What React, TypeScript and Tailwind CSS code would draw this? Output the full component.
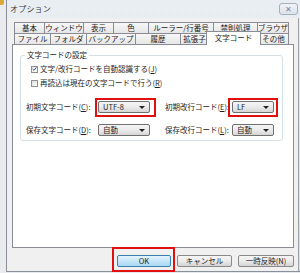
import React from "react";

const row1 = [
  { t: "基本", w: 31 },
  { t: "ウィンドウ", w: 40 },
  { t: "表示", w: 31 },
  { t: "色", w: 36 },
  { t: "ルーラー/行番号", w: 66 },
  { t: "禁則処理", w: 45 },
  { t: "ブラウザ", w: 32 },
];

const row2 = [
  { t: "ファイル", w: 37 },
  { t: "フォルダ", w: 37 },
  { t: "バックアップ", w: 50 },
  { t: "履歴", w: 46 },
  { t: "拡張子", w: 29 },
  { t: "文字コード", w: 51, sel: true },
  { t: "その他", w: 31 },
];

function Combo({ text, w }: { text: string; w: string }) {
  return (
    <div
      className={`${w} h-[12px] flex items-center justify-between pl-[4px] pr-[4px] border border-[#707070] rounded-[2px] bg-gradient-to-b from-[#f4f4f4] via-[#ebebeb] to-[#d6d6d6]`}
    >
      <span className="leading-none whitespace-nowrap">{text}</span>
      <span className="w-0 h-0 border-l-[3px] border-r-[3px] border-t-[3px] border-l-transparent border-r-transparent border-t-[#222]" />
    </div>
  );
}

function Btn({ text, w, def }: { text: React.ReactNode; w: string; def?: boolean }) {
  return (
    <div
      className={`${w} h-[12px] flex items-center justify-center rounded-[2px] border ${
        def
          ? "border-[#3c7fb1] bg-gradient-to-b from-[#e5f4fc] via-[#c4e5f8] to-[#a9d8f3]"
          : "border-[#8a8a8a] bg-gradient-to-b from-[#f6f6f6] via-[#ebebeb] to-[#d4d4d4]"
      }`}
    >
      <span className="leading-none whitespace-nowrap">{text}</span>
    </div>
  );
}

export default function App() {
  return (
    <div className="relative w-[300px] h-[273px] overflow-hidden flex bg-[#e6e9ed] font-['Noto_Sans_CJK_JP','Liberation_Sans',sans-serif] text-[7.5px] leading-none text-[#1e1e1e] whitespace-nowrap">
      {/* window behind */}
      <div className="w-[6px] shrink-0 bg-[#e9ebee]">
        <div className="w-[4px] h-[5px] bg-[#d9a93a] rounded-br-[2px]" />
      </div>
      {/* dialog */}
      <div className="flex-1 flex flex-col border-l border-b border-[#8a9099] bg-gradient-to-b from-[#e9eef3] to-[#d9e1ea] mb-[1px]">
        {/* title bar */}
        <div className="h-[18px] shrink-0 flex items-start justify-between pl-[3px] pr-[2px]">
          <span className="mt-[5px] text-[8px] text-[#3c3c3c] tracking-[0.2px]">オプション</span>
          <div className="mt-[3px] w-[19px] h-[12px] rounded-[3px] border border-[#a4afbd] bg-gradient-to-b from-[#f1f4f7] to-[#dbe2ea] flex items-center justify-center text-[8px] text-[#7b8796]">
            ✕
          </div>
        </div>
        {/* client */}
        <div className="flex-1 flex flex-col bg-[#f0f0f0] mr-[1px] border-r border-[#9aa0a8] pl-[5px] pr-[4px] pt-[4px]">
          {/* tabs */}
          <div className="relative z-10 ml-[2px] flex flex-col">
            <div className="flex h-[11px]">
              {row1.map((t, i) => (
                <div
                  key={t.t}
                  style={{ width: t.w }}
                  className={`${i > 0 ? "-ml-px" : ""} h-[11px] shrink-0 flex items-center justify-center border-l border-t border-r border-[#898c95] rounded-t-[1px] bg-gradient-to-b from-[#f7f7f7] to-[#e6e6e6]`}
                >
                  {t.t}
                </div>
              ))}
            </div>
            <div className="flex h-[11px]">
              {row2.map((t, i) =>
                t.sel ? (
                  <div
                    key={t.t}
                    style={{ width: t.w + 4 }}
                    className="-ml-[3px] -mr-[2px] -mt-[2px] h-[14px] shrink-0 relative z-20 flex items-start justify-center pt-[2px] border-l border-t border-r border-[#898c95] bg-white"
                  >
                    {t.t}
                  </div>
                ) : (
                  <div
                    key={t.t}
                    style={{ width: t.w }}
                    className={`${i > 0 ? "-ml-px" : ""} h-[11px] shrink-0 flex items-center justify-center border-l border-t border-r border-[#898c95] bg-gradient-to-b from-[#f7f7f7] to-[#e6e6e6]`}
                  >
                    {t.t}
                  </div>
                )
              )}
            </div>
          </div>
          {/* panel */}
          <div className="h-[204px] shrink-0 bg-white border border-[#898c95] pt-[6px]">
            <fieldset className="ml-[7px] mr-[10px] border border-[#d5dfe5] rounded-[3px] pb-[4px]">
              <legend className="ml-[4px] px-[2px] leading-[8px]">文字コードの設定</legend>
              <div className="pl-[10px] mt-[6px] flex flex-col gap-[6px]">
                <div className="flex items-center gap-[2px] h-[8px]">
                  <div className="w-[7px] h-[7px] border border-[#8f8f8f] bg-gradient-to-br from-[#e8e8e8] to-[#fbfbfb] flex items-center justify-center">
                    <svg width="6" height="6" viewBox="0 0 6 6">
                      <path d="M0.8 3 L2.4 4.6 L5.3 1" fill="none" stroke="#4a5a70" strokeWidth="1.2" />
                    </svg>
                  </div>
                  <span>
                    文字/改行コードを自動認識する(<span className="underline">J</span>)
                  </span>
                </div>
                <div className="flex items-center gap-[2px] h-[8px]">
                  <div className="w-[7px] h-[7px] border border-[#8f8f8f] bg-gradient-to-br from-[#e2e2e2] to-[#fafafa]" />
                  <span>
                    再読込は現在の文字コードで行う(<span className="underline">R</span>)
                  </span>
                </div>
              </div>
              <div className="pl-[5px] mt-[14px] grid grid-cols-[72px_67px_67px_42px] gap-y-[11px] items-center">
                <span>
                  初期文字コード(<span className="underline">C</span>):
                </span>
                <Combo text="UTF-8" w="w-[52px]" />
                <span>
                  初期改行コード(<span className="underline">E</span>):
                </span>
                <Combo text="LF" w="w-[42px]" />
                <span>
                  保存文字コード(<span className="underline">D</span>):
                </span>
                <Combo text="自動" w="w-[52px]" />
                <span>
                  保存改行コード(<span className="underline">L</span>):
                </span>
                <Combo text="自動" w="w-[42px]" />
              </div>
            </fieldset>
          </div>
          {/* buttons */}
          <div className="mt-[7px] flex justify-end gap-[6px]">
            <Btn text="OK" w="w-[54px]" def />
            <Btn text="キャンセル" w="w-[55px]" />
            <Btn text="一時反映(N)" w="w-[56px]" />
          </div>
        </div>
      </div>
      {/* red annotation boxes */}
      <div className="absolute left-[95px] top-[98px] w-[61px] h-[19px] border-2 border-[#e01010]" />
      <div className="absolute left-[228px] top-[98px] w-[50px] h-[19px] border-2 border-[#e01010]" />
      <div className="absolute left-[112px] top-[247px] w-[63px] h-[25px] border-2 border-[#e01010]" />
    </div>
  );
}
